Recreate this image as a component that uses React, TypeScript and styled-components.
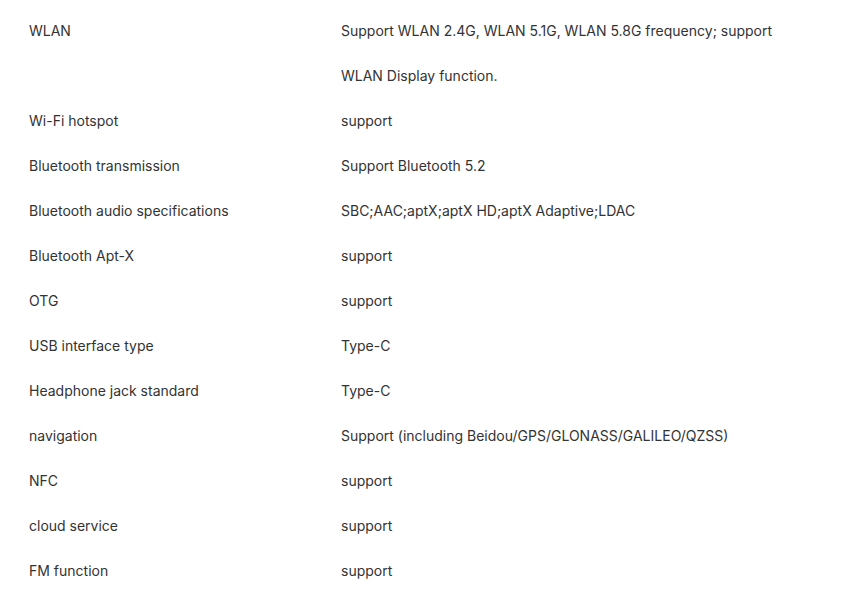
import React from "react";
import styled, { createGlobalStyle } from "styled-components";

const GlobalStyle = createGlobalStyle`
  body {
    margin: 0;
    background: #ffffff;
    font-family: Inter, "Noto Sans", sans-serif;
  }
`;

const Table = styled.div`
  display: grid;
  grid-template-columns: 312px 450px;
  padding: 8px 0 0 29px;
  color: #333333;
  font-size: 14px;
  line-height: 45px;
`;

const Label = styled.div``;

const Value = styled.div``;

const specs = [
  ["WLAN", "Support WLAN 2.4G, WLAN 5.1G, WLAN 5.8G frequency; support WLAN Display function."],
  ["Wi-Fi hotspot", "support"],
  ["Bluetooth transmission", "Support Bluetooth 5.2"],
  ["Bluetooth audio specifications", "SBC;AAC;aptX;aptX HD;aptX Adaptive;LDAC"],
  ["Bluetooth Apt-X", "support"],
  ["OTG", "support"],
  ["USB interface type", "Type-C"],
  ["Headphone jack standard", "Type-C"],
  ["navigation", "Support (including Beidou/GPS/GLONASS/GALILEO/QZSS)"],
  ["NFC", "support"],
  ["cloud service", "support"],
  ["FM function", "support"],
];

const App = () => {
  return (
    <>
      <GlobalStyle />
      <Table>
        {specs.map(([name, value]) => (
          <React.Fragment key={name}>
            <Label>{name}</Label>
            <Value>{value}</Value>
          </React.Fragment>
        ))}
      </Table>
    </>
  );
};

export default App;
